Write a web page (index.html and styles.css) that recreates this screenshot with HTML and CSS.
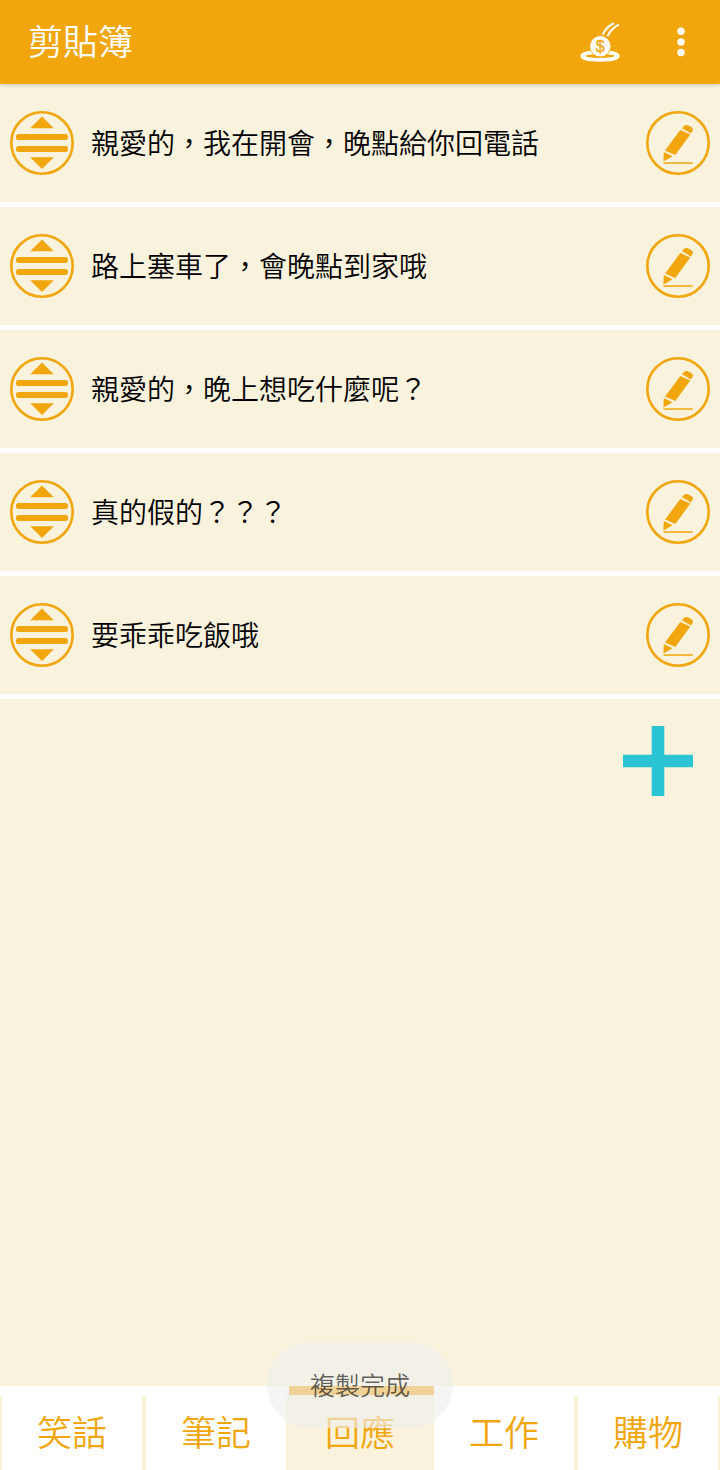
FILE: index.html
```html
<!DOCTYPE html>
<html lang="zh-TW">
<head>
    <meta charset="UTF-8">
    <meta name="viewport" content="width=device-width, initial-scale=1.0">
    <title>剪貼簿</title>
    <link rel="stylesheet" href="styles.css">
</head>
<body>

<!-- shared icons -->
<svg class="sprite" width="0" height="0">
    <symbol id="icon-move" viewBox="0 0 64 64">
        <circle cx="32" cy="32" r="30.7" fill="none" stroke="currentColor" stroke-width="2.6"/>
        <path d="M32 5.5L43.8 17.2H20.2Z M32 57.9L43.8 46.3H20.2Z"/>
        <rect x="6" y="23" width="52" height="6" rx="2.5"/>
        <rect x="6" y="35" width="52" height="6" rx="2.5"/>
    </symbol>
    <symbol id="icon-edit" viewBox="0 0 64 64">
        <circle cx="32" cy="32" r="30.7" fill="none" stroke="currentColor" stroke-width="2.6"/>
        <path d="M36 17.3L37.8 15Q39 13.6 41 14L44.6 15.6Q47.6 17.4 46.6 19.8L45 22.4Z"/>
        <path d="M34.3 19L44.3 23.6L29.3 44L19 39.6Z M17.8 41L26.6 45.3L17.4 50.4Z"/>
        <rect x="17.5" y="51.3" width="29.3" height="1.5"/>
    </symbol>
</svg>

<header class="toolbar">
    <h1>剪貼簿</h1>
    <svg class="coin" width="40" height="40" viewBox="0 0 40 40">
        <ellipse cx="20" cy="34" rx="17.8" ry="3.9" fill="none" stroke="#fff" stroke-width="3.6"/>
        <circle cx="20.3" cy="24" r="11" fill="#f2a60d"/>
        <circle cx="20.3" cy="24.2" r="10.2" fill="#fff"/>
        <path d="M22.7 12.6Q26.5 4.5 34 1.2M27.4 14.4Q31 6.5 39 2.6" fill="none" stroke="#fff" stroke-width="2.1"/>
        <text x="20.2" y="29.6" text-anchor="middle">$</text>
    </svg>
    <svg class="more" width="8" height="30" viewBox="0 0 8 30">
        <circle cx="4" cy="4.3" r="3.7"/>
        <circle cx="4" cy="15" r="3.7"/>
        <circle cx="4" cy="25.5" r="3.7"/>
    </svg>
</header>

<main class="content">
    <ul class="clips">
        <li class="clip">
            <svg class="icon"><use href="#icon-move"/></svg>
            <span class="clip-text">親愛的，我在開會，晚點給你回電話</span>
            <svg class="icon"><use href="#icon-edit"/></svg>
        </li>
        <li class="clip">
            <svg class="icon"><use href="#icon-move"/></svg>
            <span class="clip-text">路上塞車了，會晚點到家哦</span>
            <svg class="icon"><use href="#icon-edit"/></svg>
        </li>
        <li class="clip">
            <svg class="icon"><use href="#icon-move"/></svg>
            <span class="clip-text">親愛的，晚上想吃什麼呢？</span>
            <svg class="icon"><use href="#icon-edit"/></svg>
        </li>
        <li class="clip">
            <svg class="icon"><use href="#icon-move"/></svg>
            <span class="clip-text">真的假的？？？</span>
            <svg class="icon"><use href="#icon-edit"/></svg>
        </li>
        <li class="clip">
            <svg class="icon"><use href="#icon-move"/></svg>
            <span class="clip-text">要乖乖吃飯哦</span>
            <svg class="icon"><use href="#icon-edit"/></svg>
        </li>
    </ul>
    <svg class="add" width="70" height="70" viewBox="0 0 70 70">
        <path d="M28.7 0H41.3V28.8H70V41.3H41.3V70H28.7V41.3H0V28.8H28.7Z"/>
    </svg>
</main>

<nav class="tabs">
    <div class="tab">笑話</div>
    <div class="tab">筆記</div>
    <div class="tab active">回應</div>
    <div class="tab">工作</div>
    <div class="tab">購物</div>
</nav>

<div class="toast">複製完成</div>

</body>
</html>
```
FILE: styles.css
```css
* {
    box-sizing: border-box;
}
body {
    display: flex;
    flex-direction: column;
    height: 1470px;
    margin: 0;
    font-family: "Noto Sans CJK TC", sans-serif;
    font-weight: 350;
    background-color: #f9f2dc;
    color: #000;
}
.sprite {
    position: absolute;
}
.toolbar {
    display: flex;
    align-items: center;
    height: 84px;
    padding: 0 35px 0 28px;
    background-color: #f2a60d;
    box-shadow: 0 1px 4px rgba(0, 0, 0, 0.2);
    color: #fff;
}
.toolbar h1 {
    flex: 1;
    margin: 0;
    padding-bottom: 4px;
    font-size: 35px;
    font-weight: inherit;
    line-height: 80px;
}
.coin {
    margin-right: 57px;
}
.coin text {
    font-family: "Liberation Sans", sans-serif;
    font-size: 16px;
    fill: #f2a60d;
    stroke: #f2a60d;
    stroke-width: 0.4px;
}
.more {
    fill: #fff;
}
.content {
    display: flex;
    flex-direction: column;
    flex: 1;
}
.clips {
    margin: 0;
    padding: 0;
    list-style: none;
}
.clip {
    display: flex;
    align-items: center;
    gap: 17px;
    height: 123px;
    padding: 0 10px;
    border-bottom: 5px solid #fff;
}
.clip-text {
    flex: 1;
    padding-bottom: 2px;
    font-size: 28px;
    line-height: 40px;
}
.icon {
    width: 64px;
    height: 64px;
    color: #f2a60d;
    fill: currentColor;
}
.add {
    align-self: flex-end;
    margin: 27px 27px 0 0;
    fill: #2bc4d5;
}
.tabs {
    display: grid;
    grid-template-columns: repeat(5, 1fr);
    height: 84px;
    padding-top: 9px;
    background-color: #fff;
}
.tab {
    border: solid #f9f2dc;
    border-width: 0 2px;
    color: #f2a60d;
    font-size: 35px;
    line-height: 71px;
    text-align: center;
}
.tab.active {
    margin: -9px -2px 0;
    padding-top: 9px;
    border: 0;
    background: linear-gradient(#f2a60d, #f2a60d) right top / 145px 9px no-repeat, linear-gradient(#f9f2dc, #f9f2dc) 0 9px no-repeat;
}
.toast {
    position: absolute;
    left: 267px;
    top: 1342px;
    width: 186px;
    height: 86px;
    border-radius: 43px;
    background-color: rgba(238, 238, 238, 0.61);
    color: rgba(0, 0, 0, 0.62);
    font-size: 25px;
    line-height: 85px;
    text-align: center;
}
```
